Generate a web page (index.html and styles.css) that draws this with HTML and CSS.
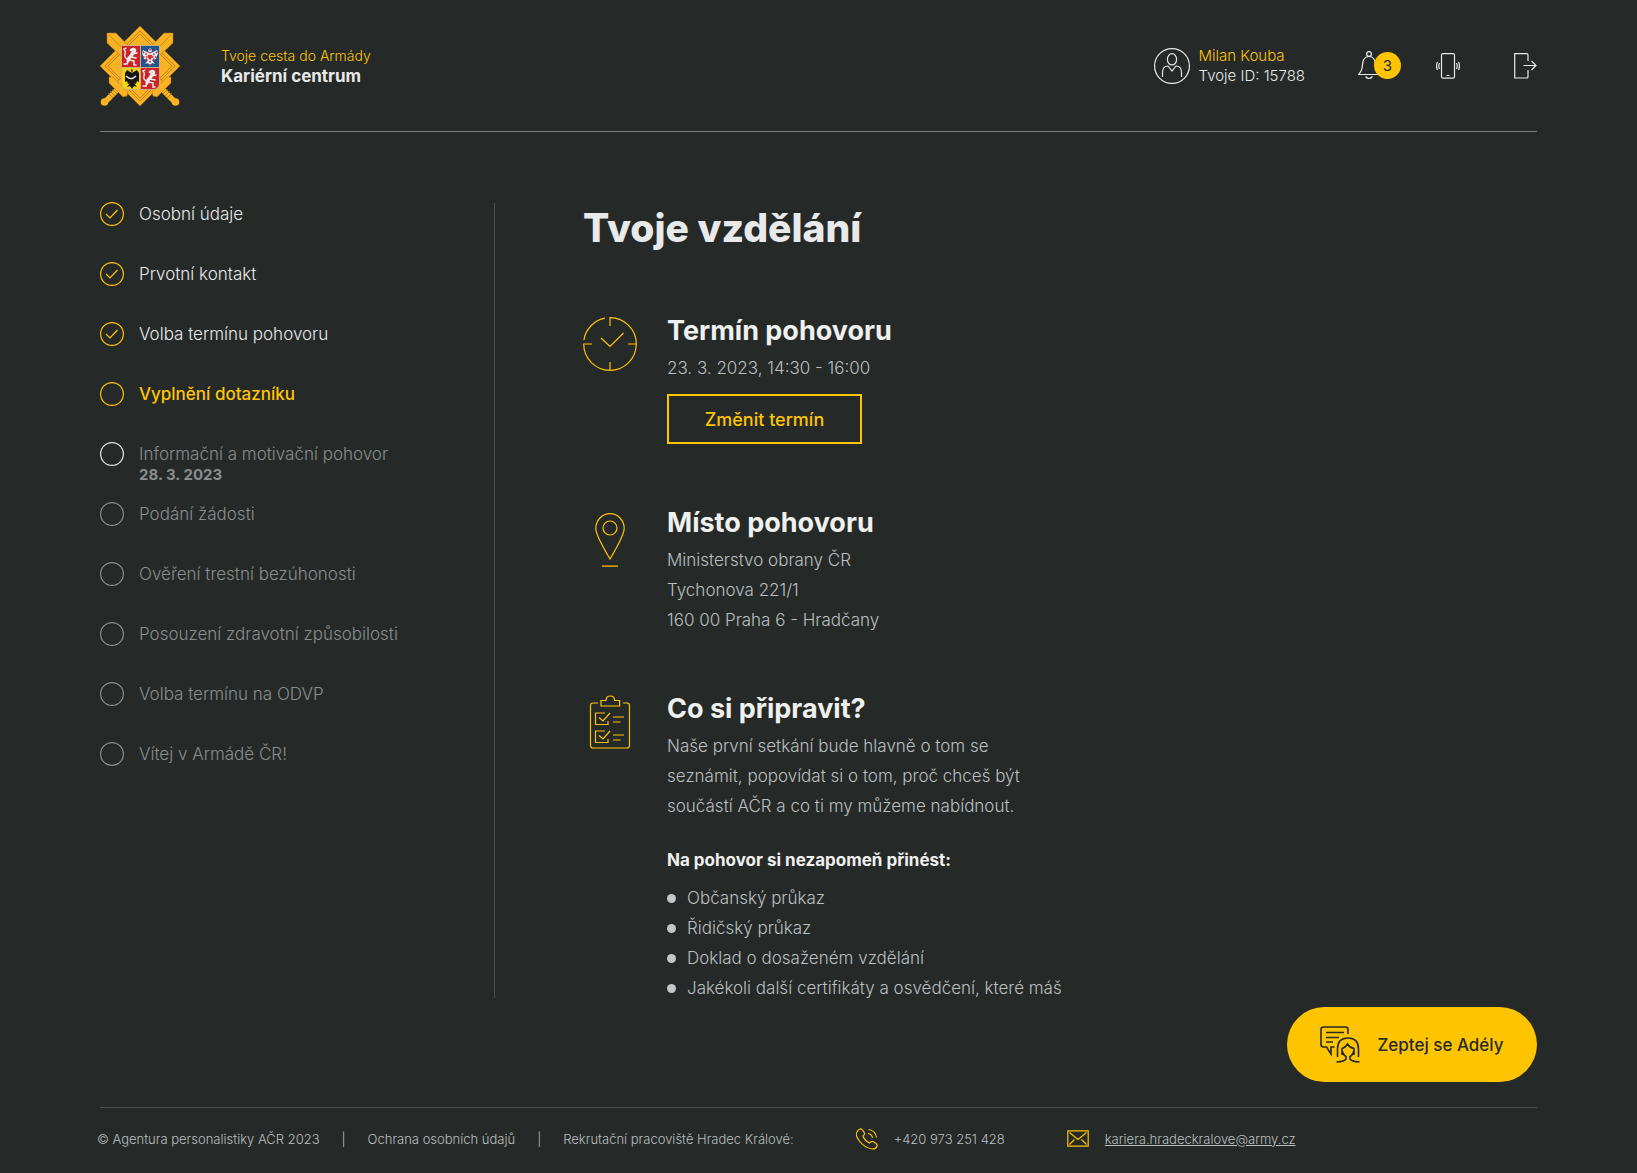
FILE: index.html
```html
<!doctype html>
<html lang="cs">
<head>
  <meta charset="UTF-8">
  <title>Kariérní centrum - Tvoje vzdělání</title>
  <meta name="viewport" content="width=device-width, initial-scale=1.0">
  <link rel="stylesheet" href="styles.css">
</head>
<body>
  <div class="page">
    <header class="header">
      <a class="brand" href="#">
        <svg class="emblem" viewBox="0 0 80 80" aria-hidden="true">
          <path d="M40 0 80 40 40 80 0 40Z" fill="#fbb323"/>
          <path d="M40 5 75 40 40 75 5 40Z M40 8 72 40 40 72 8 40Z" fill="none" stroke="#a9700f" stroke-width=".7"/>
          <!-- swords -->
          <g id="sword">
            <path d="M7 7h9l48 50-7 7L7 17Z" fill="#fbb323" stroke="#a9700f" stroke-width=".6"/>
            <path d="M9 9 60 60" stroke="#b87b12" stroke-width=".8"/>
            <path d="M60 61 75 76" stroke="#fbb323" stroke-width="5.500"/>
            <path d="M71 51h-4L52 66l1 4 4 1 14-14Z" fill="#fbb323" stroke="#a9700f" stroke-width=".5"/>
            <path d="m63 68 5-5m-3 7 5-5m-3 7 5-5" stroke="#a9700f" stroke-width=".7"/>
            <circle cx="75.500" cy="76" r="3.800" fill="#fbb323"/>
          </g>
          <use href="#sword" transform="matrix(-1 0 0 1 80 0)"/>
          <!-- quartered shield -->
          <path d="M21 19h39v38q0 7-7 7H28q-7 0-7-7Z" fill="#c9b27b"/>
          <path d="M22 20h18v21H22Z" fill="#cc2329"/>
          <path d="M41 20h18v21H41Z" fill="#205493"/>
          <path d="M22 42h18v21H28q-6 0-6-6Z" fill="#f7d40f"/>
          <path d="M41 42h18v15q0 6-6 6H41Z" fill="#cc2329"/>
          <g id="lion" fill="none" stroke="#ececec" stroke-linecap="round">
            <path d="M31 24q3-2 4 0l-1 3" stroke-width="2.600"/>
            <path d="M33 26q-1 4-4 6l-1 3" stroke-width="3.200"/>
            <path d="m32 28 5-1M31 31l5 1M30 34l4 1v4h2M28 35l-1 3h-3" stroke-width="1.500"/>
            <path d="M27 33q-3-2-2-5t-1-5l2-1" stroke-width="1.300"/>
          </g>
          <use href="#lion" transform="translate(19 22)"/>
          <!-- checkered eagle -->
          <path d="m50 22 2 2-1 3 6-3 1 3-2 6-4 1 3 4-3-1-2 3-2-3-3 1 3-4-4-1-2-6 1-3 6 3-1-3Z" fill="#ececec"/>
          <path d="M50 23v17M43 26l13 9M57 26l-13 9M43 31h14" stroke="#cc2329" stroke-width="1.600" stroke-dasharray="1.500 1.500"/>
          <!-- black eagle -->
          <path d="m31 43 2 1-1 3 5-3 2 3v9l-2-1-1 3-2-1 3 4-3-1-2 3-2-3-3 1 3-4-2 1-1-3-2 1v-9l2-3 5 3-1-3Z" fill="#171717"/>
          <path d="M26 50q5 5 10 0" fill="none" stroke="#f1f1f1" stroke-width="1.200"/>
        </svg>
        <span class="brand-text">
          <span class="brand-claim">Tvoje cesta do Armády</span>
          <strong class="brand-name">Kariérní centrum</strong>
        </span>
      </a>

      <div class="tools">
        <a class="profile" href="#">
          <svg class="avatar" viewBox="0 0 36 36" aria-hidden="true">
            <circle cx="18" cy="18" r="17.4"/>
            <ellipse cx="18" cy="11.3" rx="4.6" ry="5.6"/>
            <path d="M8.500 29v-4.500q0-6.500 5.500-6.500l4 5 4-5q5.500 0 5.500 6.500V29"/>
          </svg>
          <span class="profile-text">
            <span class="profile-name">Milan Kouba</span>
            <span>Tvoje ID: 15788</span>
          </span>
        </a>
        <button class="tool bell" type="button" aria-label="Oznámení">
          <svg width="22" height="29" viewBox="0 0 22 29" aria-hidden="true">
            <circle cx="11" cy="3" r="2.400"/>
            <path d="M21.300 23.500H.7Q4.500 19 4.500 13.500 5 5.500 11 5.500t6.500 8q0 5.500 3.800 10ZM7.500 25.500q3.500 4 7 0"/>
          </svg>
          <span class="badge">3</span>
        </button>
        <button class="tool mobile" type="button" aria-label="Mobil">
          <svg width="24" height="26" viewBox="0 0 24 26" aria-hidden="true">
            <rect x="5.500" y=".7" width="13" height="24.500" rx="1.500"/>
            <path d="M10.500 22.500h3M3.500 10q-1.500 3 0 6M1.500 9q-2 4 0 8M20.500 10q1.500 3 0 6M22.500 9q2 4 0 8"/>
          </svg>
        </button>
        <button class="tool logout" type="button" aria-label="Odhlásit">
          <svg width="23" height="26" viewBox="0 0 23 26" aria-hidden="true">
            <path d="M14 8V2q0-1.300-1.300-1.300H.7V25h12q1.300 0 1.300-1.300V17M9.500 12.500h12.500M17.500 8l4.500 4.500-4.500 4.500"/>
          </svg>
        </button>
      </div>
    </header>

    <div class="layout">
      <nav class="sidebar">
        <ol class="steps">
          <li class="step done">
            <svg class="step-icon" viewBox="0 0 24 24" aria-hidden="true"><circle cx="12" cy="12" r="11.400"/><path d="m6 12 4 4 7.500-8"/></svg>
            <a href="#">Osobní údaje</a>
          </li>
          <li class="step done">
            <svg class="step-icon" viewBox="0 0 24 24" aria-hidden="true"><circle cx="12" cy="12" r="11.400"/><path d="m6 12 4 4 7.500-8"/></svg>
            <a href="#">Prvotní kontakt</a>
          </li>
          <li class="step done">
            <svg class="step-icon" viewBox="0 0 24 24" aria-hidden="true"><circle cx="12" cy="12" r="11.400"/><path d="m6 12 4 4 7.500-8"/></svg>
            <a href="#">Volba termínu pohovoru</a>
          </li>
          <li class="step active">
            <svg class="step-icon" viewBox="0 0 24 24" aria-hidden="true"><circle cx="12" cy="12" r="11.400"/></svg>
            <a href="#" aria-current="step">Vyplnění dotazníku</a>
          </li>
          <li class="step next">
            <svg class="step-icon" viewBox="0 0 24 24" aria-hidden="true"><circle cx="12" cy="12" r="11.400"/></svg>
            <div>
              <a href="#">Informační a motivační pohovor</a>
              <strong class="step-date">28. 3. 2023</strong>
            </div>
          </li>
          <li class="step">
            <svg class="step-icon" viewBox="0 0 24 24" aria-hidden="true"><circle cx="12" cy="12" r="11.400"/></svg>
            <a href="#">Podání žádosti</a>
          </li>
          <li class="step">
            <svg class="step-icon" viewBox="0 0 24 24" aria-hidden="true"><circle cx="12" cy="12" r="11.400"/></svg>
            <a href="#">Ověření trestní bezúhonosti</a>
          </li>
          <li class="step">
            <svg class="step-icon" viewBox="0 0 24 24" aria-hidden="true"><circle cx="12" cy="12" r="11.400"/></svg>
            <a href="#">Posouzení zdravotní způsobilosti</a>
          </li>
          <li class="step">
            <svg class="step-icon" viewBox="0 0 24 24" aria-hidden="true"><circle cx="12" cy="12" r="11.400"/></svg>
            <a href="#">Volba termínu na ODVP</a>
          </li>
          <li class="step">
            <svg class="step-icon" viewBox="0 0 24 24" aria-hidden="true"><circle cx="12" cy="12" r="11.400"/></svg>
            <a href="#">Vítej v Armádě ČR!</a>
          </li>
        </ol>
      </nav>

      <main class="content">
        <h1>Tvoje vzdělání</h1>

        <section class="info">
          <svg class="info-icon" viewBox="0 0 54 54" aria-hidden="true">
            <path d="M27 9V.7A26.300 26.300 0 1 1 .7 27H9M.9 23A26.300 26.300 0 0 1 22 1.200M27 53.300V45M53.300 27H45M18 21l9 8.500L40.500 16"/>
          </svg>
          <div class="info-body">
            <h2>Termín pohovoru</h2>
            <p>23. 3. 2023, 14:30 - 16:00</p>
            <button class="change-btn" type="button">Změnit termín</button>
          </div>
        </section>

        <section class="info place">
          <svg class="info-icon" viewBox="0 0 54 54" aria-hidden="true">
            <path d="M27 46Q12.800 22 12.800 15.500a14.200 14.800 0 0 1 28.400 0Q41.200 22 27 46ZM19 53.200h16"/>
            <circle cx="27" cy="15" r="7"/>
          </svg>
          <div class="info-body">
            <h2>Místo pohovoru</h2>
            <p>Ministerstvo obrany ČR<br>Tychonova 221/1<br>160 00 Praha 6 - Hradčany</p>
          </div>
        </section>

        <section class="info">
          <svg class="info-icon" viewBox="0 0 54 54" aria-hidden="true">
            <path d="M15 8h-5q-2.500 0-2.500 2.500v40q0 2.500 2.500 2.500h34q2.500 0 2.500-2.500v-40Q46.500 8 44 8h-4"/>
            <path d="M18 11V5.500h5q0-4.500 4.300-4.500t4.300 4.500h5V11ZM22 18h-9.500v11.500H25V26M16 22.500l4 3.500 7-8M22 36h-9.500v11.500H25V44M16 40.500l4 3.500 7-8M30 22h11M30 27h7.500M30 40h11M30 45h7.500"/>
          </svg>
          <div class="info-body">
            <h2>Co si připravit?</h2>
            <p>Naše první setkání bude hlavně o tom se<br>seznámit, popovídat si o tom, proč chceš být<br>součástí AČR a co ti my můžeme nabídnout.</p>
            <h3>Na pohovor si nezapomeň přinést:</h3>
            <ul class="bring-list">
              <li>Občanský průkaz</li>
              <li>Řidičský průkaz</li>
              <li>Doklad o dosaženém vzdělání</li>
              <li>Jakékoli další certifikáty a osvědčení, které máš</li>
            </ul>
          </div>
        </section>
      </main>
    </div>

    <button class="chat-btn" type="button">
      <svg width="40" height="37" viewBox="0 0 40 37" aria-hidden="true">
        <path d="M28 8V3.500Q28 1 25.500 1H3.500Q1 1 1 3.500v15Q1 21 3.500 21H6.500l4.500 7v-7h3.500M6 6.500h18M6 11.500h13M6 16h7"/>
        <path d="M17.500 31V23Q17.500 12 28 12T38.500 23V31"/>
        <path d="M22 29V22.500q3.500-1 5.500-4.500 2 3.500 6.500 4.500V29M22 24q1 5 4 6.500v2.500q-1.500 2.500-9.500 3M34 24q-1 5-4 6.500v2.500q1.500 2.500 9.500 3"/>
      </svg>
      Zeptej se Adély
    </button>

    <footer class="footer">
      <ul class="footer-links">
        <li>© Agentura personalistiky AČR 2023</li>
        <li><a href="#">Ochrana osobních údajů</a></li>
        <li>Rekrutační pracoviště Hradec Králové:</li>
      </ul>
      <a class="contact phone" href="tel:+420973251428">
        <svg width="22" height="22" viewBox="0 0 22 22" aria-hidden="true">
          <path d="M4.500.8Q6 .5 8.500 5q.5 1.500-1.500 3 1 4 6.500 7 2-2 3.500-1.500 4.500 2.500 4.200 4-1 3.700-5 3.500Q9 20 3.800 13.500T1 4Q1.500 2 4.500.8ZM12 5.500q4 .5 4.500 4.500M12.500 1.500q7 1 8 8"/>
        </svg>
        +420 973 251 428
      </a>
      <a class="contact mail" href="mailto:kariera.hradeckralove@army.cz">
        <svg width="22" height="17" viewBox="0 0 22 17" aria-hidden="true">
          <path d="M.8.8h20.400v15.400H.8ZM2.500 2.500l8.500 7 8.500-7M2.500 14.500l5-5M19.500 14.500l-5-5"/>
        </svg>
        <span>kariera.hradeckralove@army.cz</span>
      </a>
    </footer>
  </div>
</body>
</html>
```
FILE: styles.css
```css
:root {
  --bg: #252a29;
  --text: #e8e9e8;
  --text-soft: #bcbfbf;
  --text-muted: #8a8d8c;
  --accent: #ffc400;
  --line: #7b7e7d;
  --line-dark: #4a4e4d;
}

* {
  box-sizing: border-box;
}

body {
  margin: 0;
  min-height: 100vh;
  background-color: var(--bg);
  color: var(--text);
  font-family: Inter, "Noto Sans", sans-serif;
  font-size: 17px;
  font-weight: 300;
}

a {
  color: inherit;
  text-decoration: none;
}

button {
  font-family: inherit;
  cursor: pointer;
}

svg {
  flex: none;
  fill: none;
  stroke: currentColor;
  stroke-width: 1.2;
}

h1, h2, h3, p, ul, ol {
  margin: 0;
  padding: 0;
}

ul, ol {
  list-style: none;
}

.page {
  padding: 0 100px;
}

/* header */
.header {
  display: flex;
  justify-content: space-between;
  align-items: center;
  height: 132px;
  border-bottom: 1px solid var(--line);
}

.brand {
  display: flex;
  align-items: center;
  gap: 41px;
}

.emblem {
  width: 80px;
  height: 80px;
  stroke: none;
}

.brand-text,
.profile-text {
  display: flex;
  flex-direction: column;
  line-height: 20px;
}

.brand-claim {
  color: var(--accent);
  font-size: 14px;
}

.brand-name {
  font-size: 17px;
  font-weight: 700;
}

.tools {
  display: flex;
  align-items: center;
}

.profile {
  display: flex;
  align-items: center;
  gap: 9px;
  margin-right: 53px;
  font-size: 15px;
}

.avatar {
  width: 36px;
  height: 36px;
}

.profile-name {
  color: var(--accent);
}

.tool {
  display: flex;
  padding: 0;
  border: none;
  background: none;
  color: var(--text);
}

.bell {
  position: relative;
  margin-right: 56px;
}

.mobile {
  margin-right: 54px;
}

.badge {
  position: absolute;
  top: 1px;
  left: 16px;
  width: 27px;
  border-radius: 50%;
  background-color: var(--accent);
  color: #252a29;
  font-size: 15px;
  line-height: 27px;
  text-align: center;
}

/* steps + content */
.layout {
  display: flex;
  padding-top: 71px;
}

.sidebar {
  flex: none;
  width: 395px;
  margin-bottom: 5px;
  border-right: 1px solid var(--line-dark);
}

.steps {
  margin-top: -1px;
}

.step {
  display: flex;
  gap: 15px;
  height: 60px;
  color: var(--text-muted);
  line-height: 24px;
}

.step-icon {
  width: 24px;
  height: 24px;
}

.step.done {
  color: var(--text);
}

.step.done .step-icon {
  color: var(--accent);
}

.step.active {
  color: var(--accent);
  font-weight: 500;
}

.step.next .step-icon {
  color: var(--text);
}

.step-date {
  display: block;
  font-size: 15px;
  font-weight: 700;
  line-height: 18px;
}

.content {
  flex: 1;
  padding-left: 88px;
}

h1 {
  margin-bottom: 60px;
  font-size: 39px;
  font-weight: 800;
  line-height: 50px;
}

h2 {
  margin-bottom: 4px;
  font-size: 27px;
  font-weight: 700;
  line-height: 36px;
}

h3 {
  margin: 24px 0 8px;
  font-size: 17px;
  font-weight: 700;
  line-height: 30px;
}

.info {
  display: flex;
  gap: 30px;
}

.info + .info {
  margin-top: 56px;
}

.info-icon {
  width: 54px;
  height: 54px;
  margin-top: 4px;
  color: var(--accent);
}

.place .info-icon {
  margin-top: 8px;
}

.info-body {
  color: var(--text-soft);
  line-height: 30px;
}

.info-body h2,
.info-body h3 {
  color: #f0f0ee;
}

.change-btn {
  display: block;
  width: 195px;
  height: 50px;
  margin: 11px 0 5px;
  border: 2px solid var(--accent);
  background: none;
  color: var(--accent);
  font-size: 18px;
  font-weight: 500;
}

.bring-list li {
  display: flex;
  align-items: center;
  gap: 11px;
}

.bring-list li::before {
  content: "";
  width: 9px;
  height: 9px;
  border-radius: 50%;
  background-color: #c3c7c8;
}

.chat-btn {
  display: flex;
  align-items: center;
  justify-content: center;
  gap: 17px;
  width: 250px;
  height: 75px;
  margin: 4px 0 25px auto;
  border: none;
  border-radius: 38px;
  background-color: var(--accent);
  color: #252a29;
  font-size: 17px;
  font-weight: 500;
}

.chat-btn svg {
  stroke-width: 1.6;
}

/* footer */
.footer {
  display: flex;
  align-items: center;
  height: 62px;
  border-top: 1px solid var(--line-dark);
  color: var(--text-soft);
  font-size: 13px;
}

.footer-links {
  display: flex;
  margin-left: -3px;
}

.footer-links li + li::before {
  content: "|";
  margin: 0 22px;
}

.contact {
  display: flex;
  align-items: center;
  gap: 16px;
  margin-left: 62px;
}

.contact svg {
  color: var(--accent);
}

.mail span {
  text-decoration: underline;
}
```
